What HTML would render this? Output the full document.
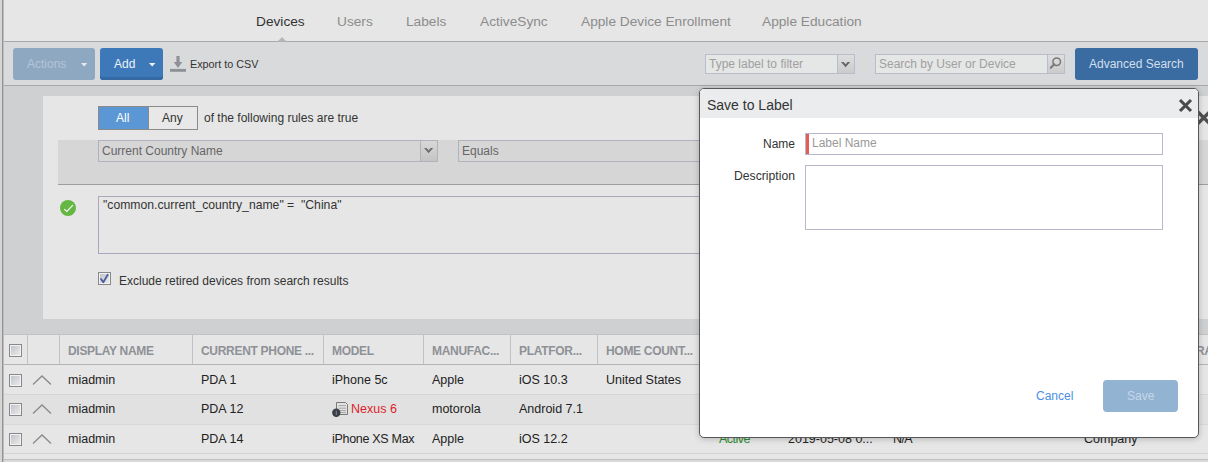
<!DOCTYPE html>
<html><head><meta charset="utf-8">
<style>
*{box-sizing:border-box;margin:0;padding:0}
html,body{width:1208px;height:462px;overflow:hidden;background:#e6e6e6;font-family:"Liberation Sans",sans-serif;color:#333}
.a{position:absolute}
.t{position:absolute;white-space:nowrap;line-height:1}
</style></head><body>
<!-- left edge -->
<div class="a" style="left:0;top:0;width:2px;height:462px;background:#d6d6d6"></div>
<div class="a" style="left:2px;top:0;width:1px;height:462px;background:#929292"></div>
<div class="a" style="left:3px;top:0;width:1px;height:462px;background:#bdbdbd"></div>

<!-- tab bar -->
<div class="a" style="left:4px;top:0;width:1204px;height:41px;background:#e6e6e6"></div>
<div class="a" style="left:4px;top:41px;width:1204px;height:1px;background:#a8a8a8"></div>
<div class="t" style="left:256px;top:14.5px;font-size:13.7px;color:#333">Devices</div>
<div class="t" style="left:337px;top:14.5px;font-size:13.7px;color:#8c8c8c">Users</div>
<div class="t" style="left:406px;top:14.5px;font-size:13.7px;color:#8c8c8c">Labels</div>
<div class="t" style="left:480px;top:14.5px;font-size:13.7px;color:#8c8c8c">ActiveSync</div>
<div class="t" style="left:581px;top:14.5px;font-size:13.7px;color:#8c8c8c">Apple Device Enrollment</div>
<div class="t" style="left:762px;top:14.5px;font-size:13.7px;color:#8c8c8c">Apple Education</div>
<svg class="a" style="left:277px;top:36px" width="10" height="6"><path d="M0.5 5.5 L5 1 L9.5 5.5 Z" fill="#b4b8bc"/></svg>

<!-- toolbar -->
<div class="a" style="left:4px;top:42px;width:1204px;height:43px;background:#d9dadc"></div>
<div class="a" style="left:4px;top:85px;width:1204px;height:1px;background:#a8a8a8"></div>
<div class="a" style="left:13px;top:48px;width:82px;height:32px;background:#8fa8c2;border-radius:3px"></div>
<div class="t" style="left:27px;top:58px;font-size:12px;color:#b3c4d6">Actions</div>
<svg class="a" style="left:81px;top:63px" width="7" height="4"><path d="M0 0 L6.2 0 L3.1 3.4 Z" fill="#e6eaef"/></svg>
<div class="a" style="left:100px;top:48px;width:63px;height:32px;background:#3d78b9;border-radius:3px;box-shadow:inset 0 -3px 0 #3569a3"></div>
<div class="t" style="left:114px;top:58px;font-size:12px;color:#eef3f8">Add</div>
<svg class="a" style="left:149px;top:63px" width="7" height="4"><path d="M0 0 L6.4 0 L3.2 3.4 Z" fill="#f0f4f8"/></svg>
<svg class="a" style="left:170px;top:56px" width="16" height="16"><path d="M6.4 0 H9.6 V6 H12.3 L8 11.9 L3.7 6 H6.4 Z" fill="#8e9296"/><rect x="0" y="12.9" width="16" height="2.9" fill="#8e9296"/></svg>
<div class="t" style="left:190px;top:59px;font-size:10.8px;color:#333">Export to CSV</div>

<div class="a" style="left:705px;top:54px;width:150px;height:20px;background:#e5e6e6;border:1px solid #b8bccb"></div>
<div class="a" style="left:837px;top:54px;width:18px;height:20px;border:1px solid #b8bccb;background:linear-gradient(#dedede,#cbcbcb)"></div>
<svg class="a" style="left:841px;top:62px" width="10" height="6"><path d="M0 0 H2.6 L4.6 2.3 L6.6 0 H9.2 L4.6 5.3 Z" fill="#666"/></svg>
<div class="t" style="left:709px;top:58px;font-size:12px;color:#a0a0a0">Type label to filter</div>

<div class="a" style="left:875px;top:54px;width:190px;height:20px;background:#e5e6e6;border:1px solid #b8bccb"></div>
<div class="a" style="left:1047px;top:54px;width:18px;height:20px;border:1px solid #b8bccb;background:linear-gradient(#dedede,#cbcbcb)"></div>
<svg class="a" style="left:1049px;top:55px" width="16" height="18"><circle cx="7.7" cy="6.8" r="3.8" stroke="#777" stroke-width="1.5" fill="none"/><path d="M5.2 9.3 L1.8 12.8" stroke="#777" stroke-width="2" stroke-linecap="round"/></svg>
<div class="t" style="left:879px;top:58px;font-size:12px;color:#a0a0a0">Search by User or Device</div>

<div class="a" style="left:1075px;top:48px;width:123px;height:32px;background:#3a6ca2;border-radius:3px"></div>
<div class="t" style="left:1089px;top:58px;font-size:12px;color:#d3dfec">Advanced Search</div>

<!-- content -->
<div class="a" style="left:4px;top:86px;width:1204px;height:248px;background:#cfd0d1"></div>
<div class="a" style="left:43px;top:96px;width:1165px;height:223px;background:#e6e6e6"></div>
<div class="a" style="left:98px;top:106px;width:100px;height:24px;border:1px solid #8a8a8a;background:#e8e8e8"></div>
<div class="a" style="left:98px;top:106px;width:51px;height:24px;border:1px solid #8a8a8a;background:#5b97d5"></div>
<div class="t" style="left:116px;top:112px;font-size:12px;color:#fff">All</div>
<div class="t" style="left:162px;top:112px;font-size:12px;color:#333">Any</div>
<div class="t" style="left:204px;top:112px;font-size:12px;color:#333">of the following rules are true</div>

<div class="a" style="left:58px;top:140px;width:1150px;height:44px;background:#d6d6d6"></div>
<div class="a" style="left:58px;top:184px;width:1150px;height:1px;background:#9e9e9e"></div>
<div class="a" style="left:98px;top:140px;width:340px;height:22px;border:1px solid #b0b2bd;background:#d6d6d6"></div>
<div class="a" style="left:420px;top:140px;width:18px;height:22px;border:1px solid #b0b2bd;background:linear-gradient(#d8d8d8,#c4c4c4)"></div>
<svg class="a" style="left:424px;top:148px" width="10" height="6"><path d="M0 0 H2.6 L4.6 2.3 L6.6 0 H9.2 L4.6 5.3 Z" fill="#6f6f6f"/></svg>
<div class="t" style="left:102px;top:145px;font-size:12px;color:#666">Current Country Name</div>
<div class="a" style="left:458px;top:140px;width:730px;height:22px;border:1px solid #b0b2bd;background:#d6d6d6"></div>
<div class="t" style="left:462px;top:145px;font-size:12px;color:#666">Equals</div>

<svg class="a" style="left:59px;top:199px" width="18" height="18"><circle cx="9" cy="9" r="8" fill="#64b742"/><path d="M5.2 10.2 L7.8 12.5 L13.9 6.2" stroke="#fff" stroke-width="1.1" fill="none"/></svg>
<div class="a" style="left:98px;top:196px;width:1090px;height:58px;border:1px solid #a8a9bb;background:#e6e6e6"></div>
<div class="t" style="left:103px;top:199px;font-size:12.2px;color:#333">"common.current_country_name" =&nbsp; "China"</div>

<div class="a" style="left:98px;top:272px;width:13px;height:13px;border:1px solid #888;background:linear-gradient(135deg,#bcc0c8,#eeeeee);box-shadow:inset 0 0 0 1px #f2f2f2"></div>
<svg class="a" style="left:99px;top:273px" width="11" height="11"><path d="M2 6 L4.3 9.2 L8.7 1.8" stroke="#4b5d9e" stroke-width="1.8" fill="none" stroke-linecap="round" stroke-linejoin="round"/></svg>
<div class="t" style="left:119px;top:275px;font-size:12px;color:#333">Exclude retired devices from search results</div>

<!-- table -->
<div class="a" style="left:4px;top:334px;width:1204px;height:125px;background:#e6e6e6"></div>
<div class="a" style="left:4px;top:334px;width:1204px;height:1px;background:#c2c2c2"></div>
<div class="a" style="left:4px;top:364px;width:1204px;height:1px;background:#b4b4b4"></div>
<div class="a" style="left:4px;top:395px;width:1204px;height:29px;background:#e1e1e1"></div>
<div class="a" style="left:4px;top:394px;width:1204px;height:1px;background:#d6d6d6"></div>
<div class="a" style="left:4px;top:424px;width:1204px;height:1px;background:#d8d8d8"></div>
<div class="a" style="left:4px;top:453px;width:1204px;height:1px;background:#d4d4d4"></div>
<div class="a" style="left:4px;top:460px;width:1204px;height:2px;background:#d9d9d9"></div>
<div class="a" style="left:4px;top:459px;width:1204px;height:1px;background:#c0c0c0"></div>

<div class="a" style="left:27px;top:335px;width:1px;height:29px;background:#c2c2c2"></div>
<div class="a" style="left:59px;top:335px;width:1px;height:29px;background:#c2c2c2"></div>
<div class="a" style="left:192px;top:335px;width:1px;height:29px;background:#c2c2c2"></div>
<div class="a" style="left:323px;top:335px;width:1px;height:29px;background:#c2c2c2"></div>
<div class="a" style="left:423px;top:335px;width:1px;height:29px;background:#c2c2c2"></div>
<div class="a" style="left:510px;top:335px;width:1px;height:29px;background:#c2c2c2"></div>
<div class="a" style="left:597px;top:335px;width:1px;height:29px;background:#c2c2c2"></div>

<div class="a" style="left:9px;top:344px;width:13px;height:13px;border:1px solid #888;background:linear-gradient(135deg,#bcc0c8,#eeeeee);box-shadow:inset 0 0 0 1px #f2f2f2"></div>
<div class="t" style="left:68px;top:345px;font-size:12px;font-weight:bold;color:#8e9196;letter-spacing:-0.3px">DISPLAY NAME</div>
<div class="t" style="left:201px;top:345px;font-size:12px;font-weight:bold;color:#8e9196;letter-spacing:-0.3px">CURRENT PHONE ...</div>
<div class="t" style="left:332px;top:345px;font-size:12px;font-weight:bold;color:#8e9196;letter-spacing:-0.3px">MODEL</div>
<div class="t" style="left:432px;top:345px;font-size:12px;font-weight:bold;color:#8e9196;letter-spacing:-0.3px">MANUFAC...</div>
<div class="t" style="left:519px;top:345px;font-size:12px;font-weight:bold;color:#8e9196;letter-spacing:-0.3px">PLATFOR...</div>
<div class="t" style="left:606px;top:345px;font-size:12px;font-weight:bold;color:#8e9196;letter-spacing:-0.3px">HOME COUNT...</div>

<!-- rows -->
<div class="a" style="left:9px;top:374px;width:13px;height:13px;border:1px solid #888;background:linear-gradient(135deg,#bcc0c8,#eeeeee);box-shadow:inset 0 0 0 1px #f2f2f2"></div>
<div class="a" style="left:9px;top:403px;width:13px;height:13px;border:1px solid #888;background:linear-gradient(135deg,#bcc0c8,#eeeeee);box-shadow:inset 0 0 0 1px #f2f2f2"></div>
<div class="a" style="left:9px;top:433px;width:13px;height:13px;border:1px solid #888;background:linear-gradient(135deg,#bcc0c8,#eeeeee);box-shadow:inset 0 0 0 1px #f2f2f2"></div>
<svg class="a" style="left:32px;top:375px" width="20" height="11"><path d="M1 9.5 L10 1 L19 9.5" stroke="#8a8a8a" stroke-width="1.3" fill="none"/></svg>
<svg class="a" style="left:32px;top:404px" width="20" height="11"><path d="M1 9.5 L10 1 L19 9.5" stroke="#8a8a8a" stroke-width="1.3" fill="none"/></svg>
<svg class="a" style="left:32px;top:434px" width="20" height="11"><path d="M1 9.5 L10 1 L19 9.5" stroke="#8a8a8a" stroke-width="1.3" fill="none"/></svg>

<div class="t" style="left:68px;top:374px;font-size:12.5px;color:#222">miadmin</div>
<div class="t" style="left:201px;top:374px;font-size:12.5px;color:#222">PDA 1</div>
<div class="t" style="left:332px;top:374px;font-size:12.5px;color:#222">iPhone 5c</div>
<div class="t" style="left:432px;top:374px;font-size:12.5px;color:#222">Apple</div>
<div class="t" style="left:519px;top:374px;font-size:12.5px;color:#222">iOS 10.3</div>
<div class="t" style="left:606px;top:374px;font-size:12.5px;color:#222">United States</div>

<div class="t" style="left:68px;top:403px;font-size:12.5px;color:#222">miadmin</div>
<div class="t" style="left:201px;top:403px;font-size:12.5px;color:#222">PDA 12</div>
<svg class="a" style="left:328px;top:398px" width="22" height="20"><path d="M8.5 4.5 H17.5 L19.5 6.5 V16.5 H8.5 Z" fill="#e2e2e2" stroke="#7a7a7a"/><path d="M10.5 7.6H18M10.5 10.2H18M10.5 12.6H18M10.5 14.6H18" stroke="#a6a6a6" stroke-width="1"/><circle cx="8.3" cy="14.8" r="4.2" fill="#3a3f48"/><path d="M8.3 12.6V17" stroke="#8a8f98" stroke-width="0.9"/></svg>
<div class="t" style="left:351px;top:403px;font-size:12.5px;color:#dc1f2c">Nexus 6</div>
<div class="t" style="left:432px;top:403px;font-size:12.5px;color:#222">motorola</div>
<div class="t" style="left:519px;top:403px;font-size:12.5px;color:#222">Android 7.1</div>

<div class="t" style="left:68px;top:433px;font-size:12.5px;color:#222">miadmin</div>
<div class="t" style="left:201px;top:433px;font-size:12.5px;color:#222">PDA 14</div>
<div class="t" style="left:332px;top:433px;font-size:12.5px;color:#222;letter-spacing:-0.3px">iPhone XS Max</div>
<div class="t" style="left:432px;top:433px;font-size:12.5px;color:#222">Apple</div>
<div class="t" style="left:519px;top:433px;font-size:12.5px;color:#222">iOS 12.2</div>
<div class="t" style="left:719px;top:433px;font-size:12.5px;color:#2f8f30;letter-spacing:-0.5px">Active</div>
<div class="t" style="left:788px;top:433px;font-size:12.5px;color:#222">2019-05-08 0...</div>
<div class="t" style="left:893px;top:433px;font-size:12.5px;color:#222;letter-spacing:-0.6px">N/A</div>
<div class="t" style="left:1084px;top:433px;font-size:12.5px;color:#222">Company</div>
<div class="t" style="left:1196px;top:345px;font-size:12px;font-weight:bold;color:#8e9196;letter-spacing:-0.3px">RA</div>
<svg class="a" style="left:1196px;top:110px" width="16" height="16"><path d="M2 2 L13.5 13.5 M13.5 2 L2 13.5" stroke="#505050" stroke-width="3.2"/></svg>

<!-- modal -->
<div class="a" style="left:699px;top:88px;width:500px;height:350px;background:#fff;border:1px solid #585858;border-radius:5px;box-shadow:0 1px 6px rgba(0,0,0,.22);overflow:hidden">
  <div class="a" style="left:0;top:0;width:498px;height:29px;background:#ebeced"></div>
</div>
<div class="t" style="left:707px;top:98px;font-size:14px;color:#333">Save to Label</div>
<svg class="a" style="left:1178px;top:98px" width="15" height="15"><path d="M2 2 L13 13 M13 2 L2 13" stroke="#4a4a4a" stroke-width="3.1"/></svg>
<div class="t" style="left:763px;top:138px;font-size:12px;color:#333">Name</div>
<div class="a" style="left:805px;top:133px;width:358px;height:22px;border:1px solid #b8b8cc;background:#fff"></div>
<div class="a" style="left:806px;top:134px;width:3px;height:20px;background:#e35d54"></div>
<div class="t" style="left:812px;top:137px;font-size:12px;color:#999">Label Name</div>
<div class="t" style="left:734px;top:170px;font-size:12.2px;color:#333">Description</div>
<div class="a" style="left:805px;top:165px;width:358px;height:65px;border:1px solid #b8b8cc;background:#fff"></div>
<div class="t" style="left:1036px;top:390px;font-size:12px;color:#4a90e2">Cancel</div>
<div class="a" style="left:1103px;top:380px;width:75px;height:32px;background:#93b3d3;border-radius:4px"></div>
<div class="t" style="left:1127px;top:390px;font-size:12px;color:#c5d6e8">Save</div>
</body></html>
